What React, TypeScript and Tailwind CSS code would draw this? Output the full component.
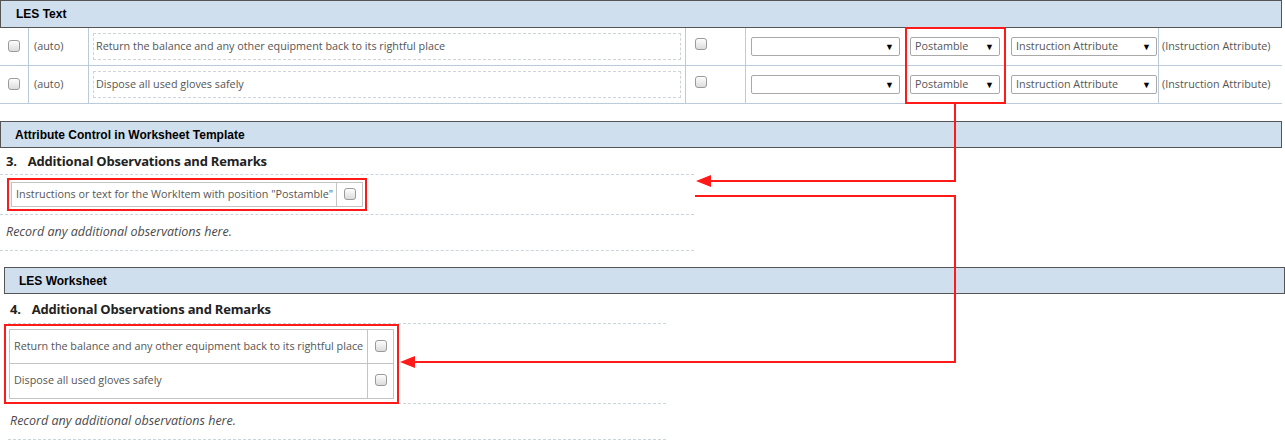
import React from 'react'

const body = "font-['Open_Sans',sans-serif]"
const bar = "font-['Liberation_Sans',Arial,sans-serif]"

function Box() {
  return (
    <span className="inline-block w-[12px] h-[12px] rounded-[3px] border border-[#9a9a9a] bg-gradient-to-b from-[#fdfdfd] to-[#dcdcdc] shadow-[inset_0_1px_1px_rgba(255,255,255,0.8)]" />
  )
}

function Select({ value, width }: { value: string; width: string }) {
  return (
    <div
      className={`${width} h-[19px] flex items-center justify-between border border-[#a9a9a9] rounded-[2px] bg-white pl-[4px] pr-[5px] text-[10.8px] text-[#555]`}
    >
      <span>{value}</span>
      <span className="text-[9px] leading-none text-black">▼</span>
    </div>
  )
}

function SectionBar({ title, className }: { title: string; className: string }) {
  return (
    <div
      className={`flex items-center bg-[#d0dfee] border border-[#555] ${bar} text-[12px] font-bold text-black ${className}`}
    >
      {title}
    </div>
  )
}

function LesRow({ text }: { text: string }) {
  return (
    <div className="flex h-[38px] border-b border-[#bccbdc] text-[10.8px] text-[#555] whitespace-nowrap">
      <div className="w-[29px] flex justify-center pt-[12px] border-r border-[#bccbdc]">
        <Box />
      </div>
      <div className="w-[60px] flex items-center pl-[5px] border-r border-[#bccbdc]">(auto)</div>
      <div className="w-[597px] flex items-center px-[4px] border-r border-[#bccbdc]">
        <div className="w-full h-[27px] flex items-center pl-[2px] border border-dashed border-[#cfd4da]">
          {text}
        </div>
      </div>
      <div className="w-[60px] pl-[9px] pt-[10px] border-r border-[#bccbdc]">
        <Box />
      </div>
      <div className="w-[159px] flex items-center pl-[5px]">
        <Select value="" width="w-[149px]" />
      </div>
      <div className="w-[100px] flex items-center pl-[5px]">
        <Select value="Postamble" width="w-[90px]" />
      </div>
      <div className="w-[154px] flex items-center pl-[6px] border-r border-[#bccbdc]">
        <Select value="Instruction Attribute" width="w-[146px]" />
      </div>
      <div className="w-[122px] flex items-center pl-[3px]">(Instruction Attribute)</div>
    </div>
  )
}

function Dashed() {
  return <div className="border-t border-dashed border-[#cbd5dc]" />
}

function Heading({ num, className }: { num: string; className: string }) {
  return (
    <div className={`flex items-center text-[13px] font-bold text-[#222] tracking-[-0.2px] ${className}`}>
      <span>{num}.</span>
      <span className="ml-[11px]">Additional Observations and Remarks</span>
    </div>
  )
}

export default function App() {
  return (
    <div className={`relative w-[1285px] h-[440px] bg-white overflow-hidden ${body}`}>
      {/* LES Text */}
      <div className="w-[1282px]">
        <SectionBar title="LES Text" className="h-[28px] pl-[15px]" />
        <LesRow text="Return the balance and any other equipment back to its rightful place" />
        <LesRow text="Dispose all used gloves safely" />
      </div>

      {/* Worksheet template */}
      <div className="mt-[17px] w-[1282px]">
        <SectionBar title="Attribute Control in Worksheet Template" className="h-[27px] pl-[14px]" />
        <div className="w-[694px]">
          <Heading num="3" className="h-[26px] pl-[6px] pt-[2px]" />
          <Dashed />
          <div className="h-[39px] flex items-center pl-[7px]">
            <div className="border-2 border-[#ff1a1a] p-[2px]">
              <div className="flex h-[25px] border border-[#c4c4c4] text-[10.8px] text-[#555] whitespace-nowrap">
                <div className="w-[325px] flex items-center pl-[4px] border-r border-[#c4c4c4]">
                  Instructions or text for the WorkItem with position "Postamble"
                </div>
                <div className="w-[25px] flex justify-center pt-[5px]">
                  <Box />
                </div>
              </div>
            </div>
          </div>
          <Dashed />
          <div className="h-[35px] flex items-center pl-[6px] text-[12.5px] italic text-[#4a4a4a]">
            Record any additional observations here.
          </div>
          <Dashed />
        </div>
      </div>

      {/* LES Worksheet */}
      <div className="mt-[16px] ml-[4px] w-[1281px]">
        <SectionBar title="LES Worksheet" className="h-[27px] pl-[14px]" />
        <div className="w-[658px] ml-[4px]">
          <Heading num="4" className="h-[29px] pl-[2px] pt-[3px]" />
          <Dashed />
          <div className="h-[79px] -ml-[4px] flex items-center">
            <div className="border-2 border-[#ff1a1a] p-[3px]">
              <div className="border border-[#c4c4c4] text-[10.8px] text-[#555] whitespace-nowrap">
                {[
                  'Return the balance and any other equipment back to its rightful place',
                  'Dispose all used gloves safely',
                ].map((t, i) => (
                  <div key={t} className={`flex h-[34px] ${i === 0 ? 'border-b border-[#c4c4c4]' : ''}`}>
                    <div className="w-[358px] flex items-center pl-[4px] border-r border-[#c4c4c4]">{t}</div>
                    <div className="w-[25px] flex justify-center pt-[10px]">
                      <Box />
                    </div>
                  </div>
                ))}
              </div>
            </div>
          </div>
          <Dashed />
          <div className="h-[35px] flex items-center pl-[2px] text-[12.5px] italic text-[#4a4a4a]">
            Record any additional observations here.
          </div>
          <Dashed />
        </div>
      </div>

      {/* red callouts */}
      <div className="absolute left-[905px] top-[27px] w-[101px] h-[77px] border-2 border-[#ff1a1a]" />
      <svg className="absolute inset-0 pointer-events-none" width="1285" height="440">
        <polyline points="955,104 955,181 708,181" fill="none" stroke="#ff1a1a" strokeWidth="2" />
        <polygon points="696,181 711,175 711,187" fill="#ff1a1a" />
        <polyline points="695,196 955,196 955,362 412,362" fill="none" stroke="#ff1a1a" strokeWidth="2" />
        <polygon points="400,362 415,356 415,368" fill="#ff1a1a" />
      </svg>
    </div>
  )
}
